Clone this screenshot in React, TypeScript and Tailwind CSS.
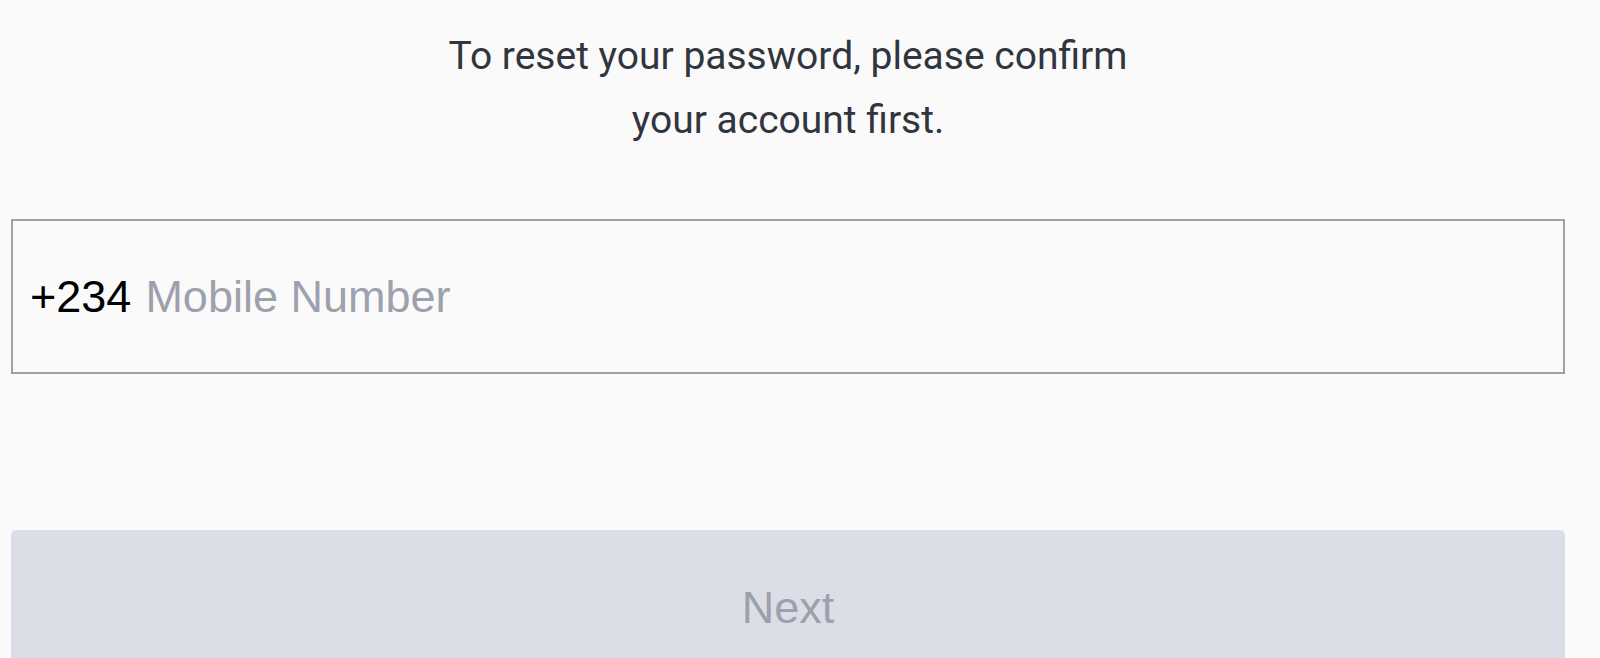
import React from "react";

export default function App() {
  return (
    <div className="min-h-screen w-full bg-[#fafafa] overflow-hidden">
      <div className="ml-[11px] w-[1554px] flex flex-col">
        <p className="mt-[24px] text-center text-[39px] leading-[64px] text-[#31353d] font-[Roboto,'Noto_Sans',sans-serif]">
          To reset your password, please confirm
          <br />
          your account first.
        </p>
        <div className="mt-[67px] h-[155px] border-2 border-[#9ea1ad] flex items-center px-[17px] text-[45px] font-['Liberation_Sans',Arial,sans-serif]">
          <span className="text-black">+234</span>
          <input
            className="ml-[14px] flex-1 bg-transparent outline-none text-black placeholder:text-[#9da1ac] font-['Liberation_Sans',Arial,sans-serif]"
            placeholder="Mobile Number"
          />
        </div>
        <button className="mt-[156px] h-[155px] w-full rounded-[5px] bg-[#dbdee6] text-[45px] text-[#9da1ac] flex items-center justify-center font-['Liberation_Sans',Arial,sans-serif]">
          Next
        </button>
      </div>
    </div>
  );
}
